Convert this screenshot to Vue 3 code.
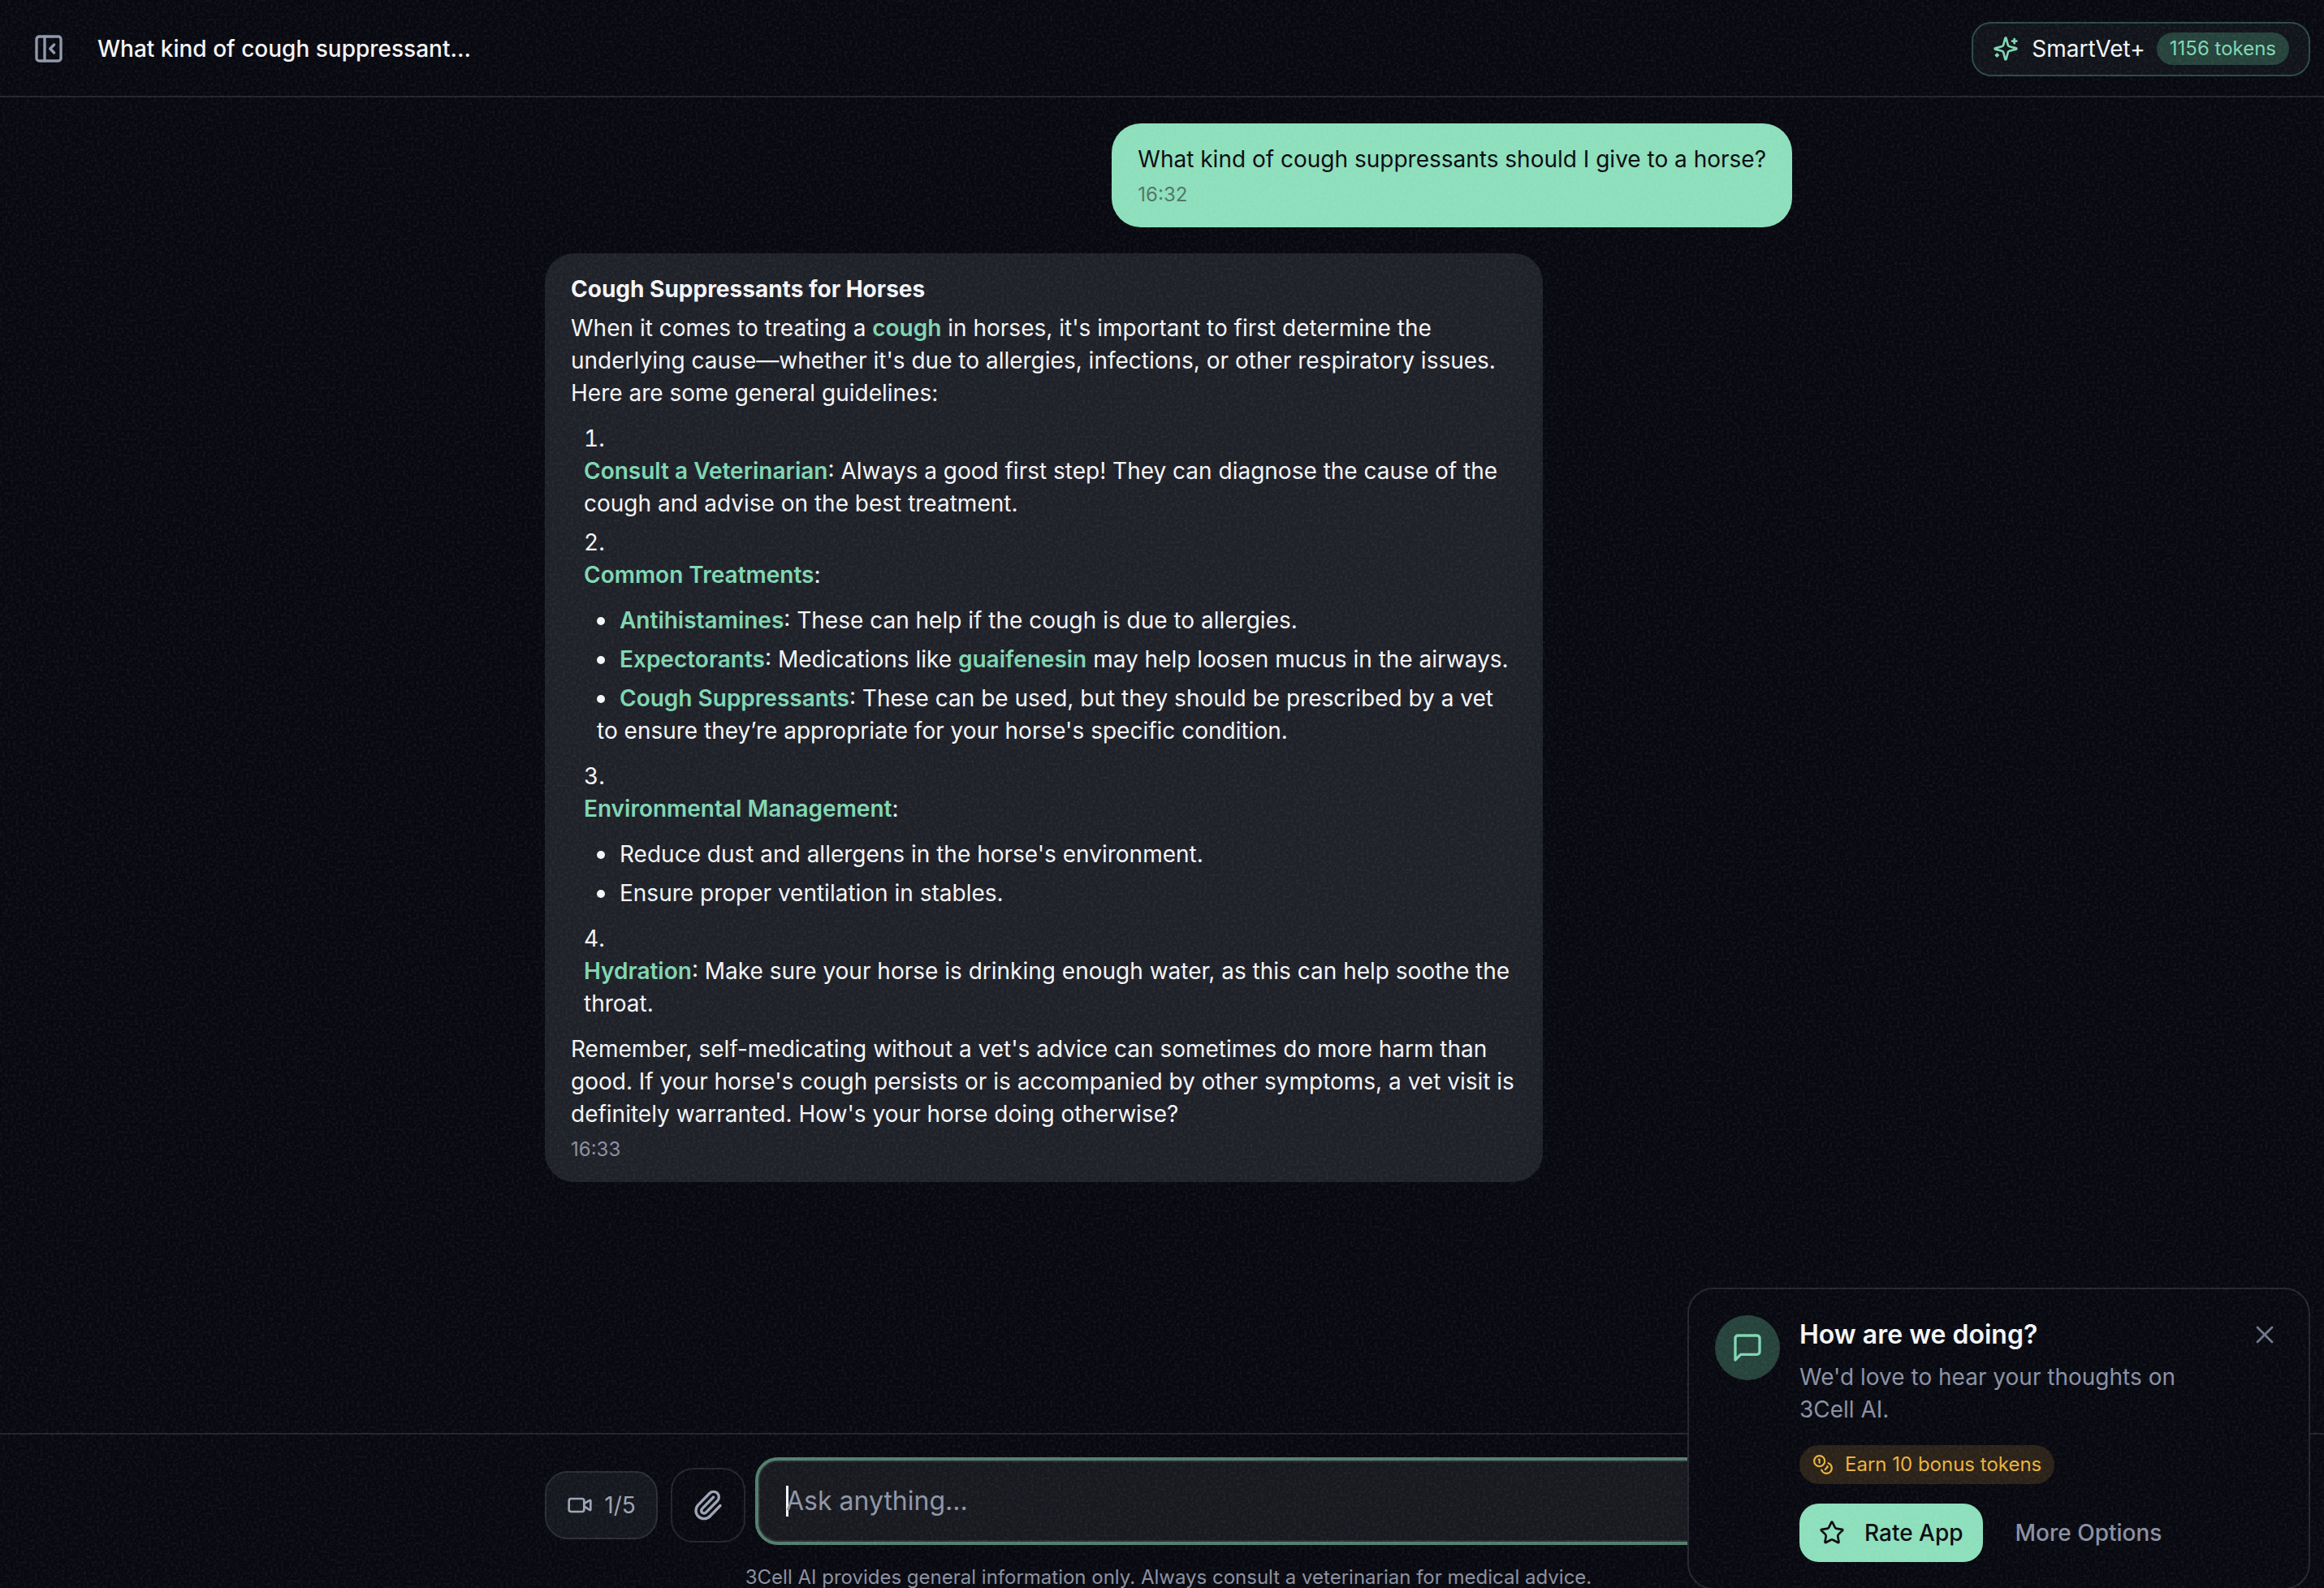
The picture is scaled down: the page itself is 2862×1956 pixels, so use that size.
<script setup>
const tokens = 1156
</script>

<template>
  <div class="app">
    <header class="topbar">
      <svg class="icon side" viewBox="0 0 24 24"><rect x="3" y="3" width="18" height="18" rx="2" /><path d="M9 3v18" /><path d="m16 15-3-3 3-3" /></svg>
      <div class="chat-title">What kind of cough suppressant...</div>
      <div class="plan">
        <svg class="icon spark" viewBox="0 0 24 24"><path d="M9.937 15.5A2 2 0 0 0 8.5 14.063l-6.135-1.582a.5.5 0 0 1 0-.962L8.5 9.936A2 2 0 0 0 9.937 8.5l1.582-6.135a.5.5 0 0 1 .963 0L14.063 8.5A2 2 0 0 0 15.5 9.937l6.135 1.581a.5.5 0 0 1 0 .964L15.5 14.063a2 2 0 0 0-1.437 1.437l-1.582 6.135a.5.5 0 0 1-.963 0z" /><path d="M20 3v4" /><path d="M22 5h-4" /><path d="M4 17v2" /><path d="M5 18H3" /></svg>
        <span class="plan-name">SmartVet+</span>
        <span class="token-pill">{{ tokens }} tokens</span>
      </div>
    </header>

    <main class="messages">
      <div class="column">
        <div class="bubble user">
          <p>What kind of cough suppressants should I give to a horse?</p>
          <div class="time">16:32</div>
        </div>

        <div class="bubble bot">
          <h3>Cough Suppressants for Horses</h3>
          <p>When it comes to treating a <b>cough</b> in horses, it's important to first determine the underlying cause—whether it's due to allergies, infections, or other respiratory issues. Here are some general guidelines:</p>
          <ol>
            <li><p><b>Consult a Veterinarian</b>: Always a good first step! They can diagnose the cause of the cough and advise on the best treatment.</p></li>
            <li>
              <p><b>Common Treatments</b>:</p>
              <ul>
                <li><b>Antihistamines</b>: These can help if the cough is due to allergies.</li>
                <li><b>Expectorants</b>: Medications like <b>guaifenesin</b> may help loosen mucus in the airways.</li>
                <li><b>Cough Suppressants</b>: These can be used, but they should be prescribed by a vet to ensure they’re appropriate for your horse's specific condition.</li>
              </ul>
            </li>
            <li>
              <p><b>Environmental Management</b>:</p>
              <ul>
                <li>Reduce dust and allergens in the horse's environment.</li>
                <li>Ensure proper ventilation in stables.</li>
              </ul>
            </li>
            <li><p><b>Hydration</b>: Make sure your horse is drinking enough water, as this can help soothe the throat.</p></li>
          </ol>
          <p>Remember, self-medicating without a vet's advice can sometimes do more harm than good. If your horse's cough persists or is accompanied by other symptoms, a vet visit is definitely warranted. How's your horse doing otherwise?</p>
          <div class="time">16:33</div>
        </div>
      </div>
    </main>

    <footer class="composer">
      <div class="composer-row">
        <button class="video-btn">
          <svg class="icon" viewBox="0 0 24 24"><path d="m16 13 5.223 3.482a.5.5 0 0 0 .777-.416V7.87a.5.5 0 0 0-.752-.432L16 10.5" /><rect x="2" y="6" width="14" height="12" rx="2" /></svg>
          <span>1/5</span>
        </button>
        <button class="attach-btn">
          <svg class="icon" viewBox="0 0 24 24"><path d="M13.234 20.252 21 12.3" /><path d="m16 6-8.414 8.586a2 2 0 0 0 0 2.828 2 2 0 0 0 2.828 0l8.414-8.586a4 4 0 0 0 0-5.656 4 4 0 0 0-5.656 0l-8.415 8.585a6 6 0 1 0 8.486 8.486" /></svg>
        </button>
        <div class="ask"><i class="caret"></i>Ask anything...</div>
      </div>
      <div class="disclaimer">3Cell AI provides general information only. Always consult a veterinarian for medical advice.</div>
    </footer>

    <aside class="feedback">
      <div class="fb-avatar">
        <svg class="icon" viewBox="0 0 24 24"><path d="M21 15a2 2 0 0 1-2 2H7l-4 4V5a2 2 0 0 1 2-2h14a2 2 0 0 1 2 2z" /></svg>
      </div>
      <div class="fb-body">
        <div class="fb-title">How are we doing?</div>
        <div class="fb-text">We'd love to hear your thoughts on 3Cell AI.</div>
        <div class="fb-bonus">
          <svg class="icon" viewBox="0 0 24 24"><circle cx="8" cy="8" r="6" /><path d="M18.09 10.37A6 6 0 1 1 10.34 18" /><path d="M7 6h1v4" /><path d="m16.71 13.88.7.71-2.82 2.82" /></svg>
          <span>Earn 10 bonus tokens</span>
        </div>
        <div class="fb-actions">
          <button class="rate-btn">
            <svg class="icon" viewBox="0 0 24 24"><path d="M11.525 2.295a.53.53 0 0 1 .95 0l2.31 4.679a2.123 2.123 0 0 0 1.595 1.16l5.166.756a.53.53 0 0 1 .294.904l-3.736 3.638a2.123 2.123 0 0 0-.611 1.878l.882 5.14a.53.53 0 0 1-.771.56l-4.618-2.428a2.122 2.122 0 0 0-1.973 0L6.396 21.01a.53.53 0 0 1-.77-.56l.881-5.139a2.122 2.122 0 0 0-.611-1.879L2.16 9.795a.53.53 0 0 1 .294-.906l5.165-.755a2.122 2.122 0 0 0 1.597-1.16z" /></svg>
            Rate App
          </button>
          <button class="more-btn">More Options</button>
        </div>
      </div>
      <svg class="icon fb-close" viewBox="0 0 24 24"><path d="M18 6 6 18" /><path d="m6 6 12 12" /></svg>
    </aside>

    <svg class="grain" width="2862" height="1956">
      <filter id="grain-noise">
        <feTurbulence type="fractalNoise" baseFrequency="0.3" numOctaves="3" seed="4" />
        <feColorMatrix values="0 0 0 0 1  0 0 0 0 1  0 0 0 0 1  2.4 0 0 0 -0.95" />
      </filter>
      <rect width="2862" height="1956" filter="url(#grain-noise)" />
    </svg>
  </div>
</template>

<style>
html, body {
  margin: 0;
  background: #080910;
}
</style>

<style scoped>
* {
  box-sizing: border-box;
}

.app {
  position: relative;
  display: flex;
  flex-direction: column;
  width: 2862px;
  height: 1956px;
  overflow: hidden;
  background: #080910;
  color: #f4f5f7;
  font-family: Inter, "Liberation Sans", sans-serif;
  font-size: 28px;
  line-height: 40px;
}

.icon {
  fill: none;
  stroke: currentColor;
  stroke-width: 2;
  stroke-linecap: round;
  stroke-linejoin: round;
  flex-shrink: 0;
}

button {
  font: inherit;
  border: none;
  background: none;
  cursor: pointer;
}

.topbar {
  display: flex;
  align-items: center;
  height: 120px;
  flex-shrink: 0;
  padding: 2px 17px 0 40px;
  border-bottom: 2px solid #22242c;
}

.side {
  width: 40px;
  height: 40px;
  color: #8f98ab;
}

.chat-title {
  margin-left: 40px;
  font-weight: 500;
}

.plan {
  display: flex;
  align-items: center;
  margin-left: auto;
  height: 67px;
  padding: 0 24px;
  border: 2px solid #2d4a42;
  border-radius: 24px;
  background: #10141a;
}

.spark {
  width: 32px;
  height: 32px;
  color: #7fd6b2;
}

.plan-name {
  margin-left: 16px;
}

.token-pill {
  display: flex;
  align-items: center;
  height: 40px;
  margin-left: 14px;
  padding: 0 16px;
  border-radius: 20px;
  background: #25423b;
  color: #7fd6b2;
  font-size: 24px;
}

.messages {
  flex: 1;
  min-height: 0;
  padding: 32px 0 0 16px;
}

.column {
  display: flex;
  flex-direction: column;
  gap: 32px;
  width: 1536px;
  margin: 0 auto;
}

.bubble {
  padding: 24px 32px;
  border-radius: 36px;
}

.bubble p {
  margin: 0;
}

.user {
  align-self: flex-end;
  background: #8ddfbc;
  color: #0a0b10;
}

.time {
  margin-top: 8px;
  font-size: 24px;
  line-height: 32px;
}

.user .time {
  color: #517565;
}

.bot {
  width: 1229px;
  background: #1f2129;
}

.bot .time {
  color: #8b90a0;
}

.bot h3 {
  margin: 0 0 8px;
  font-size: 28px;
  line-height: 40px;
  font-weight: 700;
}

.bot b {
  color: #7fd6b2;
  font-weight: 600;
}

.bot ol {
  margin: 16px 0;
  padding: 0 0 0 16px;
  list-style-position: inside;
}

.bot ol > li + li {
  margin-top: 8px;
}

.bot ul {
  margin: 16px 0;
  padding: 0 0 0 16px;
  list-style: none;
}

.bot ul > li + li {
  margin-top: 8px;
}

.bot ul > li::before {
  content: "";
  display: inline-block;
  width: 10px;
  height: 10px;
  margin-right: 18px;
  border-radius: 50%;
  background: #f4f5f7;
  vertical-align: 4px;
}

.composer {
  flex-shrink: 0;
  height: 191px;
  padding: 28px 0 0 16px;
  border-top: 2px solid #22242c;
}

.composer-row {
  display: flex;
  align-items: flex-end;
  gap: 16px;
  width: 1536px;
  margin: 0 auto;
}

.video-btn {
  display: flex;
  align-items: center;
  justify-content: center;
  gap: 14px;
  width: 139px;
  height: 84px;
  margin-bottom: 7px;
  border: 2px solid #2a2c36;
  border-radius: 28px;
  background: #15171e;
  color: #9ca3b4;
}

.video-btn .icon {
  width: 32px;
  height: 32px;
}

.attach-btn {
  display: flex;
  align-items: center;
  justify-content: center;
  width: 92px;
  height: 92px;
  margin-bottom: 3px;
  border: 2px solid #23252e;
  border-radius: 28px;
  color: #9ca3b4;
}

.attach-btn .icon {
  width: 40px;
  height: 40px;
}

.ask {
  flex: 1;
  display: flex;
  align-items: center;
  height: 108px;
  margin-left: -4px;
  padding-left: 34px;
  border: 4px solid #527f6d;
  border-radius: 28px;
  background: #17191f;
  box-shadow: inset 0 0 0 2px #2a2c34;
  color: #8f96a8;
  font-size: 32px;
}

.caret {
  width: 3px;
  height: 38px;
  margin-right: -3px;
  background: #f4f5f7;
}

.disclaimer {
  width: 1536px;
  margin: 24px auto 0;
  color: #8b90a0;
  font-size: 24px;
  line-height: 32px;
  text-align: center;
}

.feedback {
  position: absolute;
  top: 1586px;
  right: 17px;
  display: flex;
  gap: 24px;
  width: 767px;
  padding: 32px 34px 32px 32px;
  border: 2px solid #24262f;
  border-radius: 32px;
  background: #080910;
}

.fb-avatar {
  display: flex;
  align-items: center;
  justify-content: center;
  width: 80px;
  height: 80px;
  flex-shrink: 0;
  border-radius: 50%;
  background: #25423b;
  color: #7fd6b2;
}

.fb-avatar .icon {
  width: 40px;
  height: 40px;
}

.fb-body {
  flex: 1;
  min-width: 0;
  padding-top: 4px;
}

.fb-title {
  font-size: 32px;
  line-height: 40px;
  font-weight: 600;
}

.fb-text {
  margin-top: 12px;
  color: #8a90a4;
}

.fb-bonus {
  display: inline-flex;
  align-items: center;
  gap: 14px;
  height: 48px;
  margin-top: 24px;
  padding: 0 16px;
  border-radius: 24px;
  background: #2a2118;
  color: #e8b33f;
  font-size: 24px;
}

.fb-bonus .icon {
  width: 26px;
  height: 26px;
}

.fb-actions {
  display: flex;
  align-items: center;
  gap: 16px;
  margin-top: 24px;
}

.rate-btn {
  display: flex;
  align-items: center;
  gap: 24px;
  height: 72px;
  padding: 0 24px;
  border-radius: 24px;
  background: #8ddfbc;
  color: #0a0b10;
  font-weight: 500;
}

.rate-btn .icon {
  width: 32px;
  height: 32px;
}

.more-btn {
  padding: 0 24px;
  color: #8a90a4;
  font-weight: 500;
}

.fb-close {
  width: 36px;
  height: 36px;
  margin: 6px 2px 0 0;
  color: #6f778b;
  stroke-width: 1.8;
}

.grain {
  position: absolute;
  top: 0;
  left: 0;
  opacity: 0.05;
  pointer-events: none;
}
</style>
